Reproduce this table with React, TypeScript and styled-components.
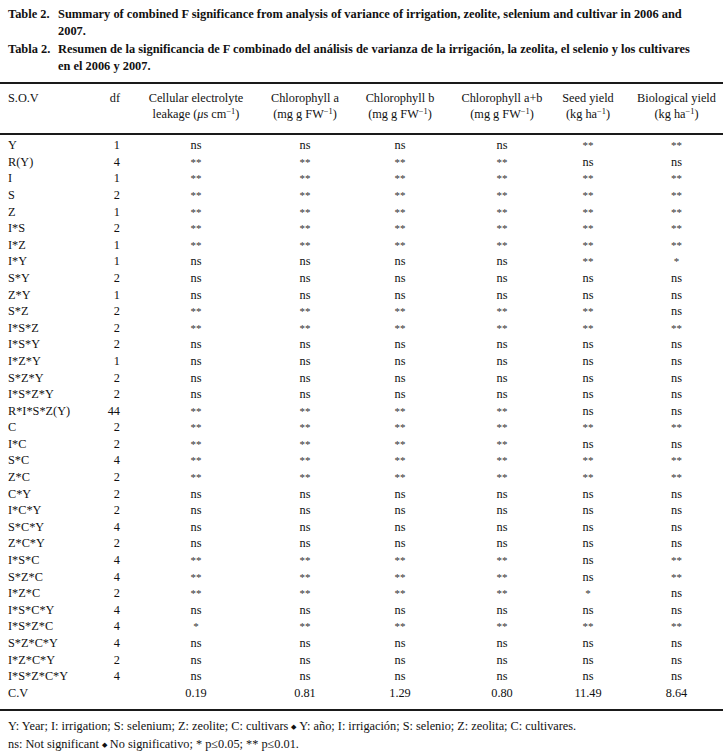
import React from "react";
import styled, { createGlobalStyle } from "styled-components";

const GlobalStyle = createGlobalStyle`
  html, body { margin: 0; padding: 0; background: #ffffff; }
  body {
    font-family: "Liberation Serif", "Times New Roman", serif;
    color: #111;
    width: 723px;
  }
`;

const COLS = "96px 28px 144px 74px 116px 88px 84px 1fr";

const Page = styled.div`
  padding-top: 6px;
  width: 723px;
`;

const Caption = styled.div`
  display: grid;
  grid-template-columns: 50px 1fr;
  padding: 0 8px;
  font-weight: bold;
  font-size: 12.4px;
  line-height: 17.3px;
  color: #111;
`;

const CaptionLabel = styled.div`
  white-space: nowrap;
`;

const CaptionText = styled.div`
  white-space: nowrap;
`;

const Table = styled.div`
  margin-top: 7px;
  border-top: 2px solid #1a1a1a;
  border-bottom: 2px solid #1a1a1a;
  font-size: 12.3px;
`;

const HeadRow = styled.div`
  display: grid;
  grid-template-columns: ${COLS};
  padding: 6px 0 11px;
  border-bottom: 2px solid #1a1a1a;
  line-height: 16px;
`;

const Body = styled.div`
  padding: 2px 0 8px;
`;

const Row = styled.div`
  display: grid;
  grid-template-columns: ${COLS};
  height: 16.6px;
  line-height: 16.6px;
`;

const SourceCell = styled.div`
  padding-left: 8px;
  white-space: nowrap;
`;

const DfCell = styled.div`
  text-align: right;
  padding-right: 4px;
  white-space: nowrap;
`;

const HeadCell = styled.div`
  justify-self: center;
  text-align: center;
  white-space: nowrap;
`;

const ValueCell = styled.div<{ $star?: boolean }>`
  justify-self: center;
  text-align: center;
  white-space: nowrap;
  font-size: ${(p) => (p.$star ? "11px" : "12.3px")};
  color: ${(p) => (p.$star ? "#333" : "#111")};
`;

const Sup = styled.sup`
  font-size: 0.68em;
  line-height: 0;
  vertical-align: 0.45em;
`;

const Mu = styled.i`
  font-style: italic;
`;

const Notes = styled.div`
  padding: 7px 8px 0;
  font-size: 12.3px;
  line-height: 17px;
  color: #111;
`;

const Sep = styled.span`
  font-size: 7px;
  vertical-align: 1px;
  margin: 0 3px;
`;

const Unit: React.FC<{ children: React.ReactNode }> = ({ children }) => (
  <>
    ({children}
    <Sup>−1</Sup>)
  </>
);

const A = ["**", "**", "**", "**", "**", "**"];
const N = ["ns", "ns", "ns", "ns", "ns", "ns"];

const rows: [string, string, string[]][] = [
  ["Y", "1", ["ns", "ns", "ns", "ns", "**", "**"]],
  ["R(Y)", "4", ["**", "**", "**", "**", "ns", "ns"]],
  ["I", "1", A],
  ["S", "2", A],
  ["Z", "1", A],
  ["I*S", "2", A],
  ["I*Z", "1", A],
  ["I*Y", "1", ["ns", "ns", "ns", "ns", "**", "*"]],
  ["S*Y", "2", N],
  ["Z*Y", "1", N],
  ["S*Z", "2", ["**", "**", "**", "**", "**", "ns"]],
  ["I*S*Z", "2", A],
  ["I*S*Y", "2", N],
  ["I*Z*Y", "1", N],
  ["S*Z*Y", "2", N],
  ["I*S*Z*Y", "2", N],
  ["R*I*S*Z(Y)", "44", ["**", "**", "**", "**", "ns", "ns"]],
  ["C", "2", A],
  ["I*C", "2", ["**", "**", "**", "**", "ns", "ns"]],
  ["S*C", "4", A],
  ["Z*C", "2", A],
  ["C*Y", "2", N],
  ["I*C*Y", "2", N],
  ["S*C*Y", "4", N],
  ["Z*C*Y", "2", N],
  ["I*S*C", "4", ["**", "**", "**", "**", "ns", "**"]],
  ["S*Z*C", "4", ["**", "**", "**", "**", "ns", "**"]],
  ["I*Z*C", "2", ["**", "**", "**", "**", "*", "ns"]],
  ["I*S*C*Y", "4", N],
  ["I*S*Z*C", "4", ["*", "**", "**", "**", "**", "**"]],
  ["S*Z*C*Y", "4", N],
  ["I*Z*C*Y", "2", N],
  ["I*S*Z*C*Y", "4", N],
  ["C.V", "", ["0.19", "0.81", "1.29", "0.80", "11.49", "8.64"]],
];

export default function App() {
  return (
    <Page>
      <GlobalStyle />
      <Caption>
        <CaptionLabel>Table 2.</CaptionLabel>
        <CaptionText>
          Summary of combined F significance from analysis of variance of irrigation, zeolite, selenium and cultivar in 2006 and
          <br />
          2007.
        </CaptionText>
        <CaptionLabel>Tabla 2.</CaptionLabel>
        <CaptionText>
          Resumen de la significancia de F combinado del análisis de varianza de la irrigación, la zeolita, el selenio y los cultivares
          <br />
          en el 2006 y 2007.
        </CaptionText>
      </Caption>

      <Table>
        <HeadRow>
          <SourceCell>S.O.V</SourceCell>
          <DfCell>df</DfCell>
          <HeadCell>
            Cellular electrolyte
            <br />
            leakage <Unit><Mu>μ</Mu>s cm</Unit>
          </HeadCell>
          <HeadCell>
            Chlorophyll a
            <br />
            <Unit>mg g FW</Unit>
          </HeadCell>
          <HeadCell>
            Chlorophyll b
            <br />
            <Unit>mg g FW</Unit>
          </HeadCell>
          <HeadCell>
            Chlorophyll a+b
            <br />
            <Unit>mg g FW</Unit>
          </HeadCell>
          <HeadCell>
            Seed yield
            <br />
            <Unit>kg ha</Unit>
          </HeadCell>
          <HeadCell>
            Biological yield
            <br />
            <Unit>kg ha</Unit>
          </HeadCell>
        </HeadRow>
        <Body>
          {rows.map(([src, df, vals]) => (
            <Row key={src}>
              <SourceCell>{src}</SourceCell>
              <DfCell>{df}</DfCell>
              {vals.map((v, i) => (
                <ValueCell key={i} $star={v.startsWith("*")}>
                  {v}
                </ValueCell>
              ))}
            </Row>
          ))}
        </Body>
      </Table>

      <Notes>
        Y: Year; I: irrigation; S: selenium; Z: zeolite; C: cultivars<Sep>◆</Sep>Y: año; I: irrigación; S: selenio; Z: zeolita; C: cultivares.
        <br />
        ns: Not significant<Sep>◆</Sep>No significativo; * p≤0.05; ** p≤0.01.
      </Notes>
    </Page>
  );
}
